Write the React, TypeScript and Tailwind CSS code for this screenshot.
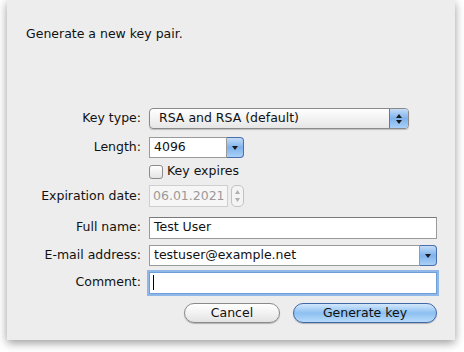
import { useState } from "react";

const font = { fontFamily: '"DejaVu Sans", "Lucida Grande", sans-serif' };

const Row = ({ label, children, className = "" }: { label?: string; children: React.ReactNode; className?: string }) => (
  <div className={`flex items-center ${className}`}>
    <div className="w-[135px] shrink-0 pr-[1px] text-right">{label ? `${label}:` : ""}</div>
    <div className="ml-[7px] flex items-center">{children}</div>
  </div>
);

const UpDown = () => (
  <svg width="8" height="12" viewBox="0 0 8 12">
    <path d="M4 1 L7 5 L1 5 Z" fill="#1a1a1a" />
    <path d="M4 11 L7 7 L1 7 Z" fill="#1a1a1a" />
  </svg>
);

const Down = () => (
  <svg width="8" height="6" viewBox="0 0 8 6">
    <path d="M1 1 L7 1 L4 5 Z" fill="#1a1a1a" />
  </svg>
);

const App = () => {
  const [expires, setExpires] = useState(false);

  return (
    <div className="h-[352px] w-[464px] bg-white text-[12.5px] text-[#111]" style={font}>
      <div className="ml-[7px] flex h-[340px] w-[448px] flex-col bg-[#ededed] shadow-[0_3px_9px_rgba(0,0,0,0.4)]">
        <div className="pl-[19px] pt-[25px]">Generate a new key pair.</div>

        <div className="mt-[64px] flex flex-col">
          {/* key type */}
          <Row label="Key type" className="h-[22px]">
            <div className="flex h-[21px] w-[260px] items-center overflow-hidden rounded-[4px] border border-[#8a8a8a] bg-gradient-to-b from-white to-[#e6e6e6] shadow-[0_1px_1px_rgba(0,0,0,0.2)]">
              <div className="flex-1 pl-[9px]">RSA and RSA (default)</div>
              <div className="flex h-full w-[19px] items-center justify-center border-l border-[#5578b8] bg-gradient-to-b from-[#c3dcf7] via-[#7fb2ec] to-[#a9d0f7]">
                <UpDown />
              </div>
            </div>
          </Row>

          {/* length */}
          <Row label="Length" className="mt-[7px] h-[22px]">
            <div className="flex h-[21px] w-[95px] items-center">
              <div className="flex h-full flex-1 items-center border border-[#9a9a9a] bg-white pl-[4px]">4096</div>
              <div className="flex h-full w-[17px] items-center justify-center rounded-r-[4px] border border-l-0 border-[#4a6fae] bg-gradient-to-b from-[#c3dcf7] via-[#7fb2ec] to-[#a9d0f7]">
                <Down />
              </div>
            </div>
          </Row>

          {/* expires */}
          <Row className="mt-[3px] h-[20px]">
            <button
              onClick={() => setExpires(!expires)}
              className="mr-[4px] h-[14px] w-[14px] rounded-[3px] border border-[#8c8c8c] bg-gradient-to-b from-white to-[#e4e4e4]"
            />
            <span>Key expires</span>
          </Row>

          {/* expiration date */}
          <Row label="Expiration date" className="mt-[3px] h-[23px]">
            <div className="flex h-[22px] w-[79px] items-center border border-[#cfcfcf] bg-[#f6f6f6] pl-[3px] text-[#9a9a9a]">
              06.01.2021
            </div>
            <div className="ml-[3px] flex h-[22px] w-[13px] flex-col items-center justify-center gap-[4px] rounded-[5px] border border-[#c2c2c2] bg-[#f4f4f4]">
              <svg width="5" height="4" viewBox="0 0 5 4"><path d="M2.5 0 L5 4 L0 4 Z" fill="#b0b0b0" /></svg>
              <svg width="5" height="4" viewBox="0 0 5 4"><path d="M0 0 L5 0 L2.5 4 Z" fill="#b0b0b0" /></svg>
            </div>
          </Row>

          {/* full name */}
          <Row label="Full name" className="mt-[9px] h-[22px]">
            <div className="flex h-[22px] w-[288px] items-center border border-[#9a9a9a] border-t-[#7a7a7a] bg-white pl-[4px]">
              Test User
            </div>
          </Row>

          {/* email */}
          <Row label="E-mail address" className="mt-[6px] h-[22px]">
            <div className="flex h-[21px] w-[288px] items-center">
              <div className="flex h-full flex-1 items-center border border-[#9a9a9a] bg-white pl-[4px]">testuser@example.net</div>
              <div className="flex h-full w-[17px] items-center justify-center rounded-r-[4px] border border-l-0 border-[#4a6fae] bg-gradient-to-b from-[#c3dcf7] via-[#7fb2ec] to-[#a9d0f7]">
                <Down />
              </div>
            </div>
          </Row>

          {/* comment */}
          <Row label="Comment" className="mt-[5px] h-[22px]">
            <div className="flex h-[22px] w-[288px] items-center border border-[#6f9fd8] bg-white pl-[3px] shadow-[0_0_0_2px_#8fb8e8]">
              <div className="h-[15px] w-[1px] bg-black" />
            </div>
          </Row>

          {/* buttons */}
          <div className="mt-[9px] flex justify-end gap-[13px] pr-[18px]">
            <button className="h-[20px] w-[96px] rounded-full border border-[#8a8a8a] bg-gradient-to-b from-white via-[#f2f2f2] to-[#e2e2e2] shadow-[0_1px_1px_rgba(0,0,0,0.25)]">
              Cancel
            </button>
            <button className="h-[20px] w-[144px] rounded-full border border-[#3f68a8] bg-gradient-to-b from-[#d3e7fb] via-[#8cc0f2] to-[#b8dafa] shadow-[0_1px_1px_rgba(0,0,0,0.25)]">
              Generate key
            </button>
          </div>
        </div>
      </div>
    </div>
  );
};

export default App;
